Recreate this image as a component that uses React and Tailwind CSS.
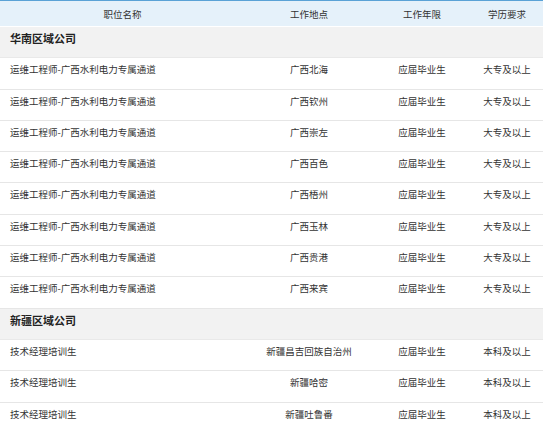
import React from "react";

const groups = [
  {
    name: "华南区域公司",
    rows: [
      ["运维工程师-广西水利电力专属通道", "广西北海", "应届毕业生", "大专及以上"],
      ["运维工程师-广西水利电力专属通道", "广西钦州", "应届毕业生", "大专及以上"],
      ["运维工程师-广西水利电力专属通道", "广西崇左", "应届毕业生", "大专及以上"],
      ["运维工程师-广西水利电力专属通道", "广西百色", "应届毕业生", "大专及以上"],
      ["运维工程师-广西水利电力专属通道", "广西梧州", "应届毕业生", "大专及以上"],
      ["运维工程师-广西水利电力专属通道", "广西玉林", "应届毕业生", "大专及以上"],
      ["运维工程师-广西水利电力专属通道", "广西贵港", "应届毕业生", "大专及以上"],
      ["运维工程师-广西水利电力专属通道", "广西来宾", "应届毕业生", "大专及以上"],
    ],
  },
  {
    name: "新疆区域公司",
    rows: [
      ["技术经理培训生", "新疆昌吉回族自治州", "应届毕业生", "本科及以上"],
      ["技术经理培训生", "新疆哈密", "应届毕业生", "本科及以上"],
      ["技术经理培训生", "新疆吐鲁番", "应届毕业生", "本科及以上"],
    ],
  },
];

const grid = "grid grid-cols-[245px_128px_98px_72px]";

export default function App() {
  return (
    <div
      className="w-[543px] h-[430px] overflow-hidden bg-white text-[#333] text-[9.5px]"
      style={{ fontFamily: '"Noto Sans CJK SC", "Noto Sans", sans-serif' }}
    >
      <div className={`${grid} h-[26px] border-t border-[#5aa2d6] bg-[#e5f1fa] items-center leading-[12px]`}>
        <div className="text-center">职位名称</div>
        <div className="text-center">工作地点</div>
        <div className="text-center">工作年限</div>
        <div className="text-center">学历要求</div>
      </div>
      <div className="mt-px">
        {groups.map((g) => (
          <div key={g.name}>
            <div className="h-[31.3px] bg-[#f2f2f2] border-b border-[#e9e9e9] pl-[10px] pt-[4px] leading-[14px] text-[11px] font-bold text-[#222]">
              {g.name}
            </div>
            {g.rows.map((r, i) => (
              <div key={i} className={`${grid} h-[31.3px] border-b border-[#e6e6e6] pt-[5px] leading-[12px]`}>
                <div className="pl-[10px]">{r[0]}</div>
                <div className="text-center">{r[1]}</div>
                <div className="text-center">{r[2]}</div>
                <div className="text-center">{r[3]}</div>
              </div>
            ))}
          </div>
        ))}
      </div>
    </div>
  );
}
